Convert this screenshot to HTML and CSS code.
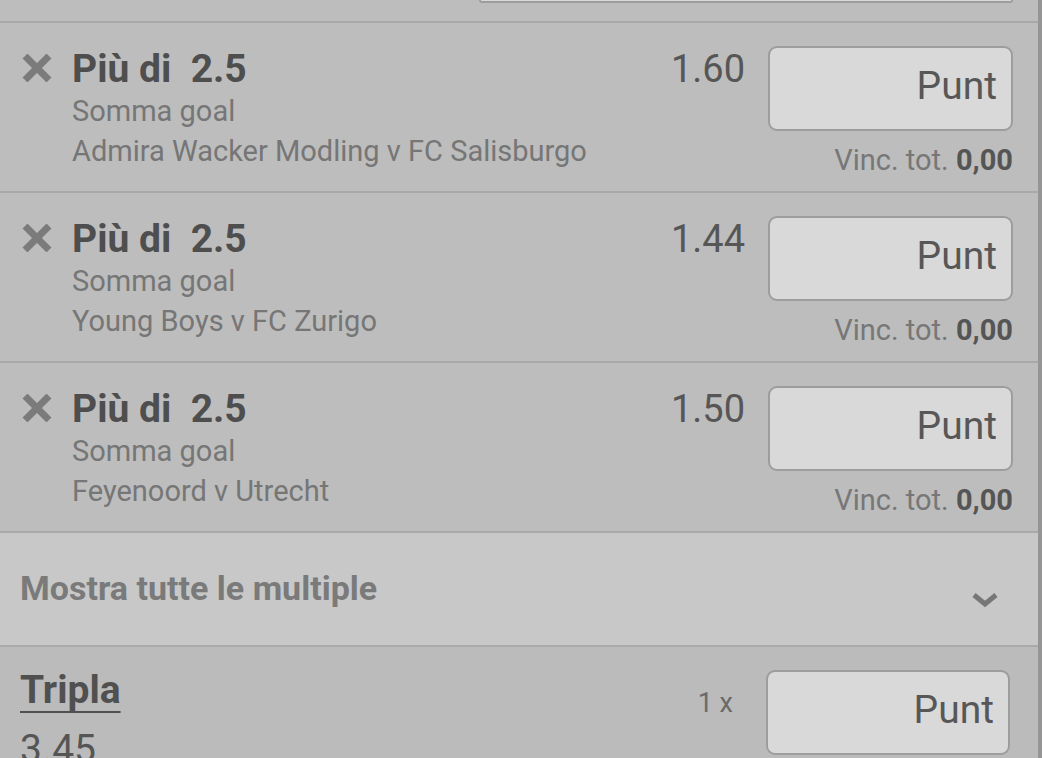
FILE: index.html
```html
<!DOCTYPE html>
<html lang="it">
  <head>
    <meta charset="UTF-8">
    <meta name="viewport" content="width=device-width, initial-scale=1.0">
    <title>Schedina</title>
    <link rel="stylesheet" href="styles.css">
  </head>
  <body>
    <div class="slip">
      <!-- bottom of the previous row -->
      <div class="prev"><div class="prev-box"></div></div>

      <div class="sel">
        <div class="remove"><svg viewBox="0 0 30 28"><path d="M3 2 L27 26 M27 2 L3 26"/></svg></div>
        <div class="sel-info">
          <div class="sel-title">Più di&nbsp; 2.5</div>
          <div class="sel-sub">Somma goal</div>
          <div class="sel-sub">Admira Wacker Modling v FC Salisburgo</div>
        </div>
        <div class="sel-odds">1.60</div>
        <div class="stake">
          <div class="stake-input">Punt</div>
          <div class="stake-win">Vinc. tot. <b>0,00</b></div>
        </div>
      </div>

      <div class="sel">
        <div class="remove"><svg viewBox="0 0 30 28"><path d="M3 2 L27 26 M27 2 L3 26"/></svg></div>
        <div class="sel-info">
          <div class="sel-title">Più di&nbsp; 2.5</div>
          <div class="sel-sub">Somma goal</div>
          <div class="sel-sub">Young Boys v FC Zurigo</div>
        </div>
        <div class="sel-odds">1.44</div>
        <div class="stake">
          <div class="stake-input">Punt</div>
          <div class="stake-win">Vinc. tot. <b>0,00</b></div>
        </div>
      </div>

      <div class="sel">
        <div class="remove"><svg viewBox="0 0 30 28"><path d="M3 2 L27 26 M27 2 L3 26"/></svg></div>
        <div class="sel-info">
          <div class="sel-title">Più di&nbsp; 2.5</div>
          <div class="sel-sub">Somma goal</div>
          <div class="sel-sub">Feyenoord v Utrecht</div>
        </div>
        <div class="sel-odds">1.50</div>
        <div class="stake">
          <div class="stake-input">Punt</div>
          <div class="stake-win">Vinc. tot. <b>0,00</b></div>
        </div>
      </div>

      <!-- Multiple -->
      <div class="more">
        <span>Mostra tutte le multiple</span>
        <svg class="chevron" viewBox="0 0 28 16"><polyline points="3,3 14,12 25,3"/></svg>
      </div>

      <div class="multi">
        <div class="multi-info">
          <div class="multi-name">Tripla</div>
          <div class="multi-odds">3.45</div>
        </div>
        <div class="multi-count">1 x</div>
        <div class="stake-input multi-input">Punt</div>
      </div>
    </div>
  </body>
</html>
```

FILE: styles.css
```css
body {
  margin: 0;
  overflow: hidden;
  font-family: Roboto, "Noto Sans", sans-serif;
  background: #bdbdbd;
}

.slip {
  width: 1042px;
  height: 758px;
  box-sizing: border-box;
  border-right: 4px solid #959595;
  overflow: hidden;
  background: #bdbdbd;
}

.prev {
  height: 23px;
  box-sizing: border-box;
  display: flex;
  justify-content: flex-end;
  padding-right: 25px;
  border-bottom: 2px solid #a9a9a9;
}

.prev-box {
  width: 534px;
  height: 3px;
  box-sizing: border-box;
  border: 2px solid #9d9d9d;
  border-top: none;
  border-radius: 0 0 6px 6px;
  background: #d9d9d9;
}

.sel {
  display: flex;
  align-items: flex-start;
  height: 170px;
  box-sizing: border-box;
  padding: 23px 25px 0 22px;
  border-bottom: 2px solid #a9a9a9;
}

.remove {
  width: 30px;
  height: 28px;
  margin-top: 8px;
  flex-shrink: 0;
}

.remove svg {
  display: block;
  width: 30px;
  height: 28px;
}

.remove path {
  stroke: #7b7b7b;
  stroke-width: 7;
  fill: none;
}

.sel-info {
  flex: 1;
  margin-left: 20px;
}

.sel-title {
  font-size: 39px;
  font-weight: 700;
  line-height: 44px;
  padding-top: 1px;
  color: #4e4e4e;
}

.sel-sub {
  font-size: 29px;
  line-height: 40px;
  color: #767676;
}

.sel-odds {
  font-size: 38px;
  line-height: 44px;
  margin-top: 1px;
  margin-right: 23px;
  color: #565656;
}

.stake {
  width: 245px;
}

.stake-input {
  height: 85px;
  box-sizing: border-box;
  display: flex;
  align-items: center;
  justify-content: flex-end;
  padding: 0 14px 6px;
  border: 2px solid #9d9d9d;
  border-radius: 9px;
  background: #d9d9d9;
  font-size: 39px;
  color: #575757;
}

.stake-win {
  margin-top: 13px;
  text-align: right;
  font-size: 29px;
  line-height: 32px;
  color: #777;
}

.stake-win b {
  color: #555;
}

.more {
  display: flex;
  justify-content: space-between;
  align-items: flex-start;
  height: 114px;
  box-sizing: border-box;
  padding: 35px 39px 0 20px;
  background: #c8c8c8;
  border-bottom: 2px solid #aaaaaa;
  font-size: 34px;
  font-weight: 700;
  line-height: 40px;
  color: #7a7a7a;
}

.chevron {
  width: 28px;
  height: 16px;
  margin-top: 24px;
}

.chevron polyline {
  fill: none;
  stroke: #777;
  stroke-width: 5;
}

.multi {
  display: flex;
  align-items: flex-start;
  padding: 21px 28px 0 20px;
  background: #bbbbbb;
}

.multi-info {
  flex: 1;
}

.multi-name {
  display: inline-block;
  font-size: 39px;
  font-weight: 700;
  line-height: 44px;
  color: #505050;
  text-decoration: underline;
  text-decoration-thickness: 2px;
  text-underline-offset: 8px;
}

.multi-odds {
  margin-top: 15px;
  font-size: 39px;
  line-height: 44px;
  color: #555;
}

.multi-count {
  margin-top: 19px;
  margin-right: 33px;
  font-size: 27px;
  line-height: 32px;
  color: #6a6a6a;
}

.multi-input {
  width: 244px;
  margin-top: 2px;
}
```
